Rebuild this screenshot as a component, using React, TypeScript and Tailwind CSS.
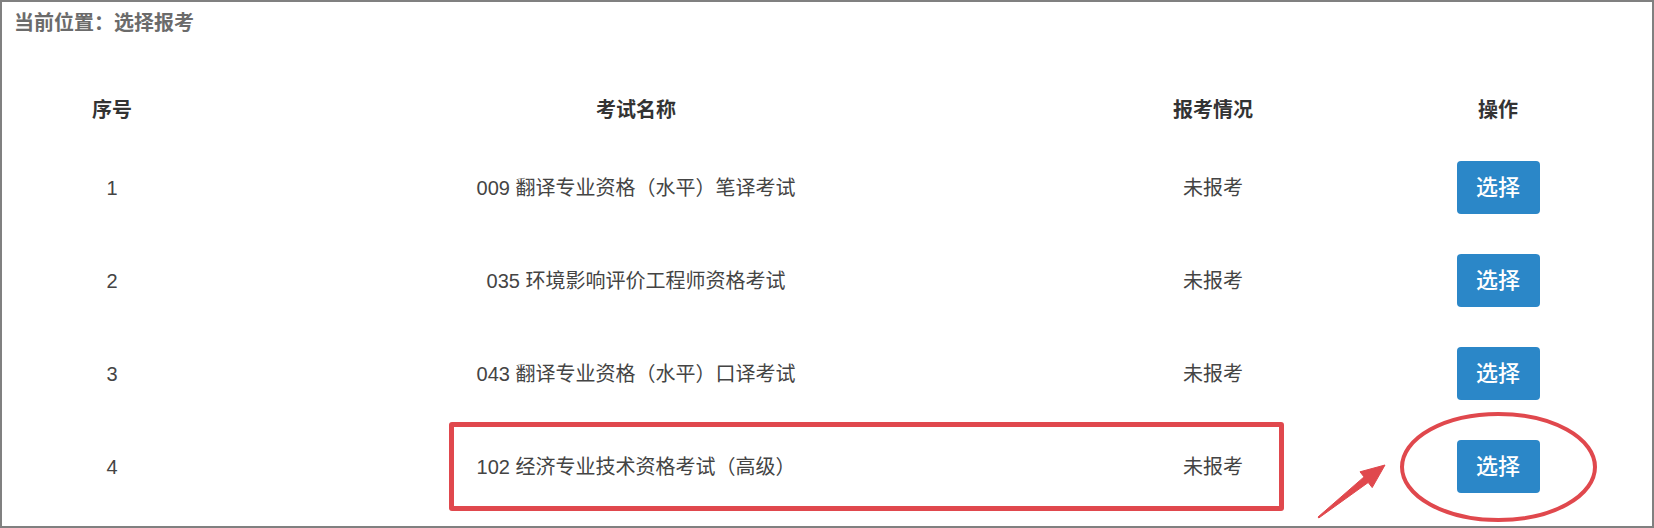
import React from 'react';

const rows = [
  { no: '1', name: '009 翻译专业资格（水平）笔译考试', status: '未报考' },
  { no: '2', name: '035 环境影响评价工程师资格考试', status: '未报考' },
  { no: '3', name: '043 翻译专业资格（水平）口译考试', status: '未报考' },
  { no: '4', name: '102 经济专业技术资格考试（高级）', status: '未报考' },
];

const cols = 'grid grid-cols-[196px_852px_302px_268px]';

export default function App() {
  return (
    <div
      className="relative h-[528px] w-[1654px] overflow-hidden border-2 border-[#808080] bg-white"
      style={{ fontFamily: '"Liberation Sans", "Noto Sans CJK SC", sans-serif' }}
    >
      <div className="flex h-[42px] items-center pl-[12px] text-[20px] font-bold text-[#6b6b6b]">
        当前位置：选择报考
      </div>

      <div className="mt-[34px] pl-[12px]">
        <div className={`${cols} h-[63px] items-center text-center text-[20px] font-bold text-[#333]`}>
          <div>序号</div>
          <div>考试名称</div>
          <div>报考情况</div>
          <div>操作</div>
        </div>
        {rows.map((r) => (
          <div key={r.no} className={`${cols} h-[93px] items-center text-center text-[20px] text-[#444]`}>
            <div>{r.no}</div>
            <div>{r.name}</div>
            <div>{r.status}</div>
            <div className="flex justify-center">
              <button className="flex h-[53px] w-[83px] items-center justify-center rounded-[4px] bg-[#2b87c8] text-[22px] font-medium text-white">
                选择
              </button>
            </div>
          </div>
        ))}
      </div>

      {/* annotations */}
      <div className="pointer-events-none absolute left-[447px] top-[420px] h-[89px] w-[835px] rounded-[3px] border-[5px] border-[#e0484d]" />
      <svg className="pointer-events-none absolute left-[-2px] top-[-2px]" width="1654" height="528">
        <ellipse cx="1498.5" cy="467" rx="96.5" ry="53" fill="none" stroke="#e0484d" strokeWidth="4" />
        <polygon
          points="1318,517 1364,476.9 1360,471.8 1385,465 1372.2,487.6 1368.2,482.5 1318.8,518"
          fill="#e0484d"
          stroke="#e0484d"
          strokeWidth="1"
          strokeLinejoin="round"
        />
      </svg>
    </div>
  );
}
